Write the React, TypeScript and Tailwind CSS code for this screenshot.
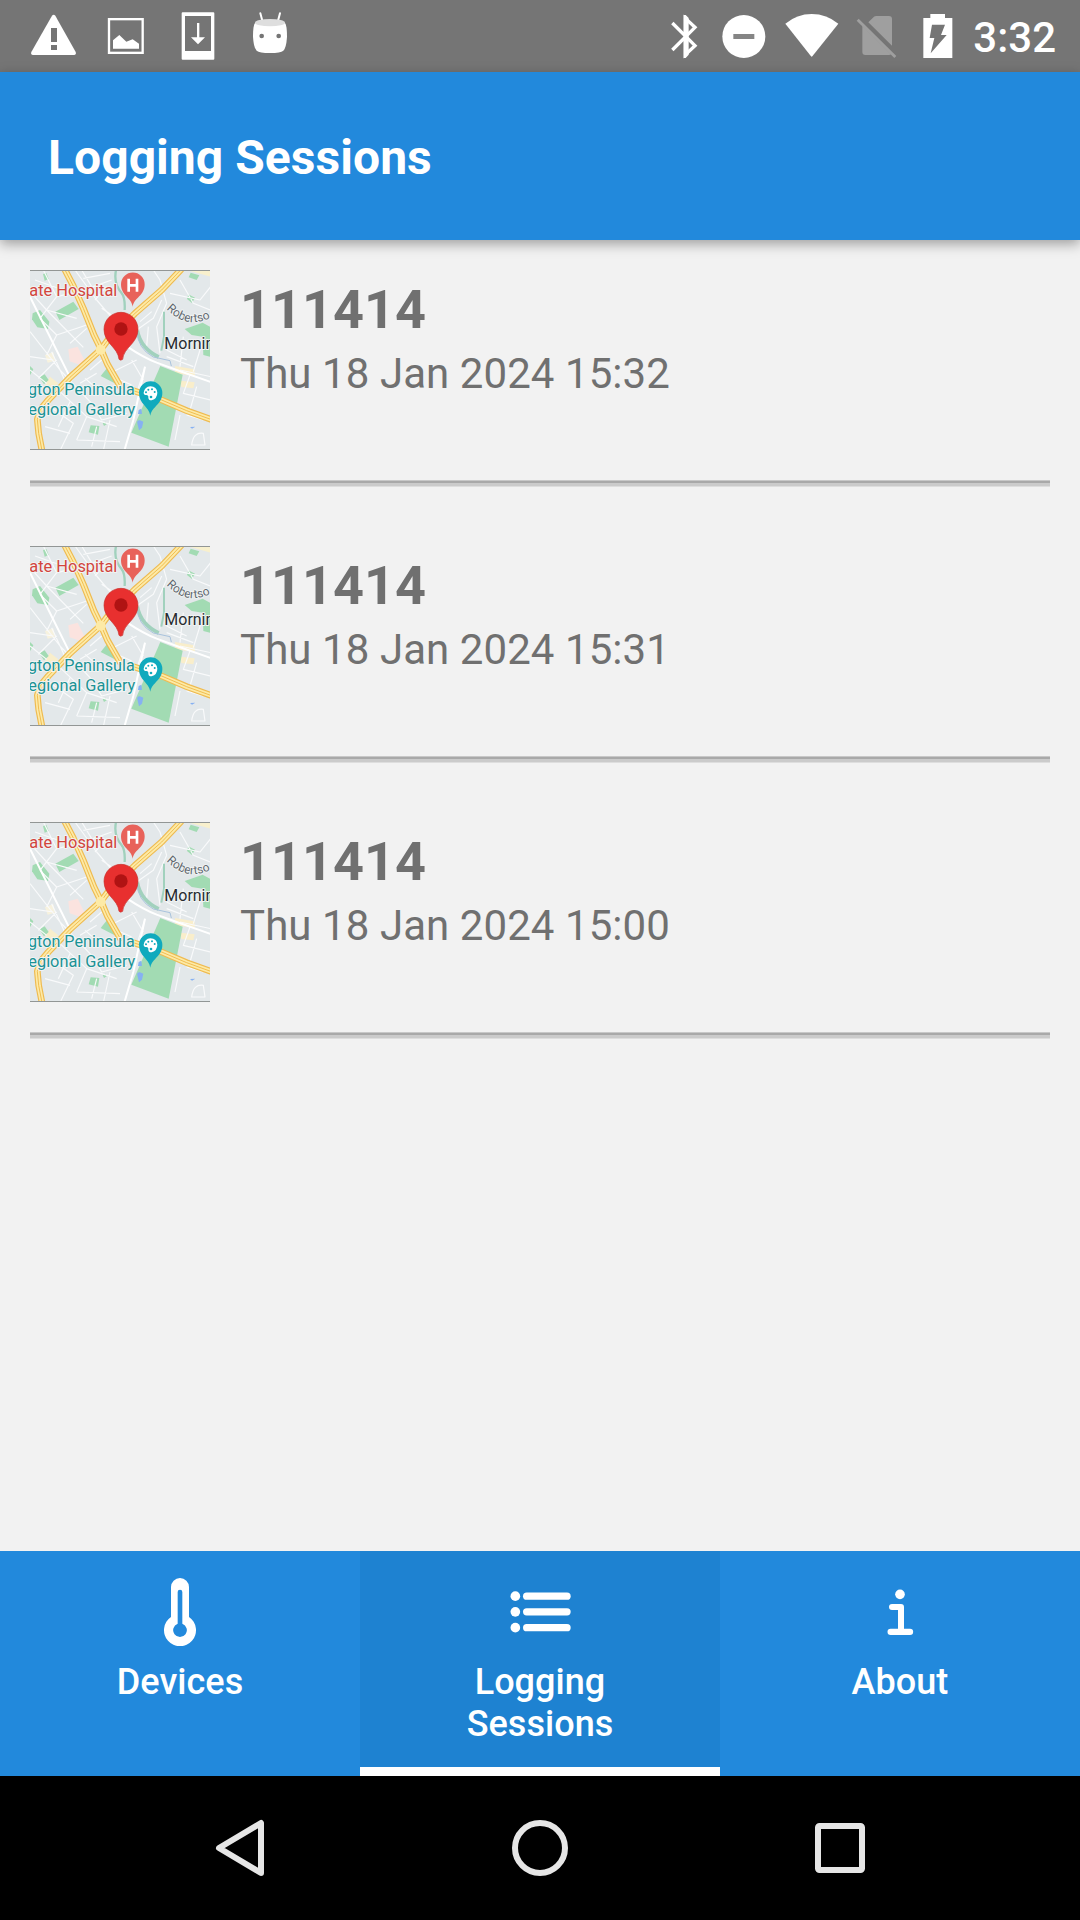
import React from "react";

const sessions = [
  { id: "111414", date: "Thu 18 Jan 2024 15:32" },
  { id: "111414", date: "Thu 18 Jan 2024 15:31" },
  { id: "111414", date: "Thu 18 Jan 2024 15:00" },
];

const mainRoads = [
  "M135 30 L160 78 L190 145 L222 225 L243 268 L262 312 L300 378",
  "M482 30 L425 90 L345 160 L262 242 L243 268 L150 352 L85 420 L60 450 L52 478 L56 520 L66 572",
  "M340 392 L425 420 L500 452 L572 478",
];

const sideStreets =
  "M30 95 L80 150 L190 262 M30 215 L120 330 L215 430 M95 275 L135 362 M45 60 L130 90 M70 30 L110 110 L60 175 M110 110 L175 95 M80 150 L170 175 M60 175 L110 225 L200 195 M110 225 L80 285 M150 250 L200 205 M165 30 L230 120 L290 190 M190 55 L270 40 M205 85 L275 60 M225 120 L260 80 M185 30 L215 80 M245 145 L275 165 M30 290 L100 300 M30 330 L80 370 M55 355 L110 300 M120 395 L200 470 L170 540 M90 440 L160 490 L120 572 M150 425 L115 500 M75 500 L150 520 M210 330 L245 300 M180 370 L230 340 M195 355 L230 385 M215 430 L245 480 L320 460 M200 470 L290 500 M170 540 L300 545 M270 480 L250 572 M230 500 L215 560 M270 340 L350 300 M290 355 L335 375 M335 300 L370 360 M375 320 L350 400 M400 30 L420 60 L440 130 M450 100 L540 120 L572 80 M480 60 L520 130 L570 150 M350 210 L400 175 L425 120 M360 185 L395 155 M385 200 L380 260 M440 130 L410 200 L420 280 M440 270 L500 300 M490 230 L480 320 M540 270 L520 335 M440 290 L520 320 M480 330 L572 350 M510 345 L490 400 L572 420 M530 380 L510 450 M480 465 L465 540 M500 465 L550 480 M515 555 Q520 515 550 520 L555 555 Z";

function MapThumbnail({ pathId }: { pathId: string }) {
  return (
    <svg viewBox="30 30 540 540" className="block size-[180px] shrink-0 font-['Roboto',sans-serif]">
      <rect x="30" y="30" width="540" height="540" fill="#e3e8ea" />
      <path d="M500 30 H572 V50Z" fill="#f8f0cd" />
      <g fill="#fbe3df">
        <path d="M145 268 l28 -8 l20 40 l-14 14 l-30 -10Z" />
        <path d="M75 285 l25 -8 l5 25 l-22 6Z" fill="#f7f2de" />
        <path d="M465 318 l58 10 l2 20 l-60 -8Z M482 362 l42 5 l-4 18 l-36 -4Z M90 350 l25 20 l-20 20 l-20 -15Z" fill="#f9eecb" />
      </g>
      <g fill="#a2dbb3">
        <path d="M38 160 L60 150 L88 185 L84 207 L52 202 L36 178Z" />
        <path d="M106 155 L160 125 L176 147 L118 180Z" />
        <path d="M58 352 L74 343 L86 360 L72 373Z M30 318 l10 10 l-10 18Z" />
        <path d="M69 42 l10 -3 l7 18 l-12 5Z" />
        <path d="M212 496 l26 2 l-4 26 l-28 -7Z M248 489 l8 -4 l4 8 l-8 5Z" />
        <path d="M262 323 L300 363 L290 373 L242 348Z" />
        <path d="M512 38 l26 8 l-8 14 l-24 -8Z M505 103 l20 10 l-9 16 l-15 -12Z" />
      </g>
      <path d={sideStreets} stroke="#f9fafb" strokeWidth="3.5" fill="none" strokeLinejoin="round" />
      <g fill="#a2dbb3">
        <path d="M494 207 L548 188 L570 200 V290 L550 285 L548 230 L515 225Z" />
        <path d="M421 318 L488 344 L446 560 L334 518Z" />
      </g>
      <g stroke="#a1d1bd" fill="none">
        <path d="M288 30 Q280 70 304 98 Q316 112 314 150" strokeWidth="7" />
        <path d="M352 212 Q362 265 416 291" strokeWidth="11" />
        <path d="M432 155 V230 L424 272" strokeWidth="6" />
      </g>
      <path d="M352 215 Q352 265 400 291 L450 302 L454 318" stroke="#a9c3dd" strokeWidth="3" fill="none" />
      <path d="M352 490 q-2 -10 8 -9 l10 4 l-4 18 l-9 8Z M356 450 l8 -4 l2 16 h-12Z M510 501 l16 -1 l-10 6Z" fill="#86b1f2" />
      <path d="M325 262 Q370 292 410 308 L470 330 L572 366 M375 320 L340 480 L313 572 M30 110 L155 362" stroke="#ffffff" strokeWidth="6" fill="none" />
      <g fill="none" strokeLinejoin="round" strokeLinecap="round">
        {mainRoads.map((d) => (
          <path key={d} d={d} stroke="#efbb50" strokeWidth="20" />
        ))}
        {mainRoads.map((d) => (
          <path key={d} d={d} stroke="#fdeaa6" strokeWidth="13" />
        ))}
        {mainRoads.map((d) => (
          <path key={d} d={d} stroke="#f0bd52" strokeWidth="3" />
        ))}
      </g>
      <circle cx="242" cy="269" r="15" fill="#fdeaa6" />
      <g paintOrder="stroke" stroke="#f1f4f4" strokeWidth="6" strokeLinejoin="round" fontSize="49">
        <text x="28" y="109" fill="#d2453d" textLength="264" lengthAdjust="spacingAndGlyphs">ate Hospital</text>
        <text x="24" y="404" fill="#1b9295" textLength="320" lengthAdjust="spacingAndGlyphs">gton Peninsula</text>
        <text x="25" y="465" fill="#1b9295" textLength="321" lengthAdjust="spacingAndGlyphs">egional Gallery</text>
        <text x="433" y="267" fill="#272b30" textLength="150" lengthAdjust="spacingAndGlyphs">Mornin</text>
        <path id={pathId} d="M439 147 Q477 186 518 187 Q550 187 600 160" fill="none" stroke="none" />
        <text fill="#60676e" fontSize="36" strokeWidth="5">
          <textPath href={"#" + pathId}>Robertso</textPath>
        </text>
      </g>
      <path d="M338 140 C334 112 303 108 303 73 A35.500 35.500 0 0 1 374 73 C374 108 343 112 338 140Z" fill="#e8625a" />
      <path d="M326 56 V95 M351 56 V95 M326 76 H351" stroke="#fff" strokeWidth="8" />
      <path d="M297 298 C294 262 252 250 252 208 A51 51 0 0 1 354 208 C354 250 311 262 308 298 Q302 303 297 298Z" fill="#e8302f" stroke="#c9302c" strokeWidth="2" />
      <circle cx="303" cy="207" r="20" fill="#b01313" />
      <path d="M391 467 C387 439 357 433 357 399 A35 35 0 0 1 427 399 C427 433 396 439 391 467Z" fill="#10aabd" />
      <path d="M391 379 A21 20 0 0 0 371 398 Q371 405 379 405 Q386 405 385 413 Q386 422 395 421 Q412 415 412 398 Q411 380 391 379Z" fill="#fff" />
      <g fill="#10aabd">
        <circle cx="378" cy="397" r="3" />
        <circle cx="385" cy="389" r="3" />
        <circle cx="396" cy="388" r="3" />
        <circle cx="404" cy="396" r="3" />
        <circle cx="393" cy="411" r="4" />
      </g>
      <path d="M30 31.500 H570 M30 568.500 H570" stroke="#929695" strokeWidth="3" />
    </svg>
  );
}

function NotificationIcons() {
  return (
    <svg viewBox="0 0 960 216" className="block h-[72px] w-[320px]" fill="#fff">
      <path d="M156 47 Q161 42 166 47 L227 156 Q230 164 222 165 H99 Q91 164 94 156Z" />
      <path d="M153 84 H171 V126 H153Z M153 135 H171 V150 H153Z" fill="#757575" />
      <rect x="327" y="57.500" width="101" height="101" fill="none" stroke="#fff" strokeWidth="7" />
      <path d="M339 146 V121 L358 105 L379 125 L398 118 L417 131 V146Z" />
      <path fillRule="evenodd" d="M548 37 H640 Q643 37 643 40 V176 Q643 179 640 179 H548 Q545 179 545 176 V40 Q545 37 548 37Z M555 48 V153 H633 V48Z" />
      <path d="M591 69 H598 V112 H615 L594 133 L573 112 H591Z" />
      <path d="M781 40 L788 66 M840 40 L833 66" stroke="#fff" strokeWidth="6" strokeLinecap="round" />
      <path d="M765 69 Q759 77 759 110 Q761 143 770 152 Q778 159 810 159 Q842 159 850 152 Q859 143 861 110 Q861 77 855 69Z" />
      <ellipse cx="810" cy="68" rx="45" ry="11" fill="#dedede" />
      <g fill="#757575">
        <circle cx="785" cy="108" r="7" />
        <circle cx="836" cy="108" r="7" />
      </g>
    </svg>
  );
}

function SystemIcons() {
  return (
    <svg viewBox="80 0 870 216" className="block h-[72px] w-[290px]" fill="#fff">
      <path d="M96 69 L164 137 L135 164 V55 L164 82 L96 150" fill="none" stroke="#fff" strokeWidth="10" />
      <path d="M130 45 H136 L145 54 V164 L136 174 H130Z" />
      <circle cx="310.500" cy="109.500" r="64.500" />
      <rect x="279" y="102" width="63" height="15" fill="#858585" />
      <path d="M435 71 Q470 42 514 42 Q559 42 594 71 L516 169 Q514 171 512 169Z" />
      <g fill="#9f9f9f">
        <path d="M666 77 L752 163 Q750 165 746 165 H675 Q666 165 666 156Z M684 67 L701 50 Q703 48 708 48 H746 Q755 48 755 57 V137Z" />
        <path d="M655 56 L768 168 L762 174 L649 62Z" />
      </g>
      <path d="M849 54 H870 V42 H914 V54 H936 V174 H849Z" />
      <path d="M875 74 H914 L902 105 H919 L871 160 L882 114 H868Z" fill="#757575" />
    </svg>
  );
}

const navIcon = "block h-[68px] w-[68px]";

function ThermometerIcon() {
  return (
    <svg viewBox="438 114 204 204" className={navIcon}>
      <path fillRule="evenodd" fill="#fff" d="M513 141 A27 27 0 0 1 567 141 V231 A48 48 0 1 1 513 231Z M533 156 V251 A20.500 20.500 0 1 0 547 251 V156 A7 7 0 0 0 533 156Z" />
    </svg>
  );
}

function ListIcon() {
  return (
    <svg viewBox="468 114 204 204" className={navIcon} fill="#fff">
      {[168.5, 215.5, 263].map((y) => (
        <g key={y}>
          <circle cx="496" cy={y} r="14.500" />
          <rect x="519" y={y - 11} width="143" height="22" rx="11" />
        </g>
      ))}
    </svg>
  );
}

function InfoIcon() {
  return (
    <svg viewBox="438 114 204 204" className={navIcon} fill="#fff">
      <circle cx="540" cy="163" r="14.500" />
      <path d="M516 192 H543 Q552 192 552 201 V266 H570 A9.500 9.500 0 0 1 570 285 H512 A9.500 9.500 0 0 1 512 266 H534 V210 H516 A9 9 0 0 1 516 192Z" />
    </svg>
  );
}

function NavTab({ icon, label, active }: { icon: React.ReactNode; label: React.ReactNode; active?: boolean }) {
  return (
    <button
      className={
        "flex flex-1 flex-col items-center pt-[27px] text-center text-[36px] leading-[42px] font-medium tracking-[0.05px] text-white " +
        (active ? "border-b-[9px] border-white bg-[#1e82d1]" : "")
      }
    >
      {icon}
      <span className="mt-[15px]">{label}</span>
    </button>
  );
}

export default function App() {
  return (
    <div className="flex h-[1920px] w-[1080px] flex-col overflow-hidden bg-[#f2f2f2] font-['Roboto',sans-serif]">
      <div className="flex h-[72px] shrink-0 items-center justify-between bg-[#757575]">
        <NotificationIcons />
        <div className="flex items-center pr-[24px]">
          <SystemIcons />
          <span className="ml-[16px] pt-[3px] text-[42px] leading-[69px] font-medium text-white">3:32</span>
        </div>
      </div>

      <header className="relative z-10 flex h-[168px] shrink-0 items-center bg-[#2289dc] px-[48px] pt-[4px] shadow-[0_4px_12px_rgba(0,0,0,0.35)]">
        <h1 className="text-[48px] leading-[56px] font-bold tracking-[0.05px] text-white">Logging Sessions</h1>
      </header>

      <main className="flex flex-1 flex-col gap-[59px] px-[30px] pt-[30px]">
        {sessions.map((s) => (
          <div key={s.date} className="flex shrink-0 flex-col">
            <div className="flex h-[210px] items-start">
              <MapThumbnail pathId={"street-" + s.date.slice(-2)} />
              <div className="ml-[30px] flex flex-1 flex-col pt-[8px] text-[#707070]">
                <span className="text-[54px] leading-[64px] font-bold">{s.id}</span>
                <span className="text-[42px] leading-[64px] tracking-[0.07px]">{s.date}</span>
              </div>
            </div>
            <div className="h-[3px] border-t border-[#c8c8c8] bg-[#a9a9a9]" />
            <div className="h-[4px] border-b border-[#dedede] bg-[#cbcbcb]" />
          </div>
        ))}
      </main>

      <nav className="flex h-[225px] shrink-0 bg-[#2289dc]">
        <NavTab icon={<ThermometerIcon />} label="Devices" />
        <NavTab
          active
          icon={<ListIcon />}
          label={
            <>
              Logging
              <br />
              Sessions
            </>
          }
        />
        <NavTab icon={<InfoIcon />} label="About" />
      </nav>

      <div className="flex h-[144px] shrink-0 items-center justify-between bg-black px-[210px]">
        <svg viewBox="0 0 60 60" className="size-[60px]" fill="none" stroke="#e6e6e6" strokeWidth="6" strokeLinejoin="round">
          <path d="M9 30 L51 5 V55Z" />
        </svg>
        <svg viewBox="0 0 60 60" className="size-[60px]" fill="none" stroke="#e6e6e6" strokeWidth="6">
          <circle cx="30" cy="30" r="25" />
        </svg>
        <svg viewBox="0 0 60 60" className="size-[60px]" fill="none" stroke="#e6e6e6" strokeWidth="6">
          <rect x="8" y="8" width="44" height="44" rx="1.500" />
        </svg>
      </div>
    </div>
  );
}
